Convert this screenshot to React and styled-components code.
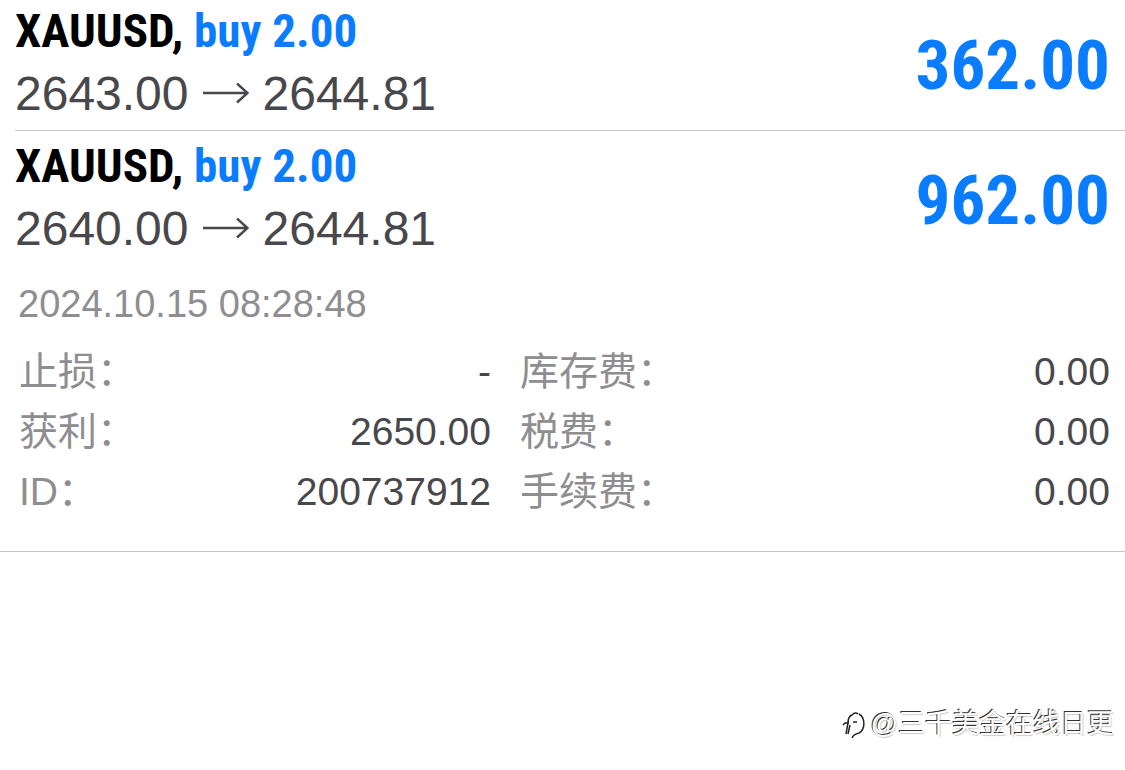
import React from "react";
import styled, { createGlobalStyle } from "styled-components";

const GlobalStyle = createGlobalStyle`
  * { box-sizing: border-box; }
  body {
    margin: 0;
    background: #fff;
    color: #48484c;
    font-family: "Liberation Sans", "Noto Sans CJK SC", sans-serif;
  }
`;

const Page = styled.main`
  display: flex;
  flex-direction: column;
  min-height: 100vh;
`;

const List = styled.section`
  border-bottom: 1px solid #c4c4c6;
  padding-bottom: 29px;
`;

const Position = styled.article`
  display: flex;
  align-items: center;
  justify-content: space-between;
  margin-left: 15px;
  padding: 5px 15px 4px 0;

  &:first-child {
    padding-top: 1px;
    border-bottom: 1px solid #c4c4c6;
  }
`;

const Title = styled.h2`
  margin: 0;
  font: bold 47px/60px "Roboto Condensed", Roboto, sans-serif;
  color: #000;
`;

const Side = styled.span`
  color: #097cff;
`;

const Prices = styled.p`
  display: flex;
  align-items: center;
  gap: 14px;
  margin: 0;
  font-size: 48px;
  line-height: 65px;
`;

const Profit = styled.strong`
  padding-top: 4px;
  font: bold 69px/84px "Roboto Condensed", Roboto, sans-serif;
  color: #097cff;
`;

const Opened = styled.time`
  display: block;
  padding: 14px 18px 13px;
  font-size: 38px;
  line-height: 50px;
  color: #8e8e90;
`;

const Details = styled.dl`
  display: grid;
  grid-template-columns: 472fr 590fr;
  column-gap: 29px;
  margin: 0;
  padding: 0 15px 0 19px;
`;

const Detail = styled.div`
  display: flex;
  justify-content: space-between;
  font-size: 39px;
  line-height: 60px;
`;

const Label = styled.dt`
  color: #8e8e90;
`;

const Value = styled.dd`
  margin: 0;
`;

const Watermark = styled.footer`
  display: flex;
  align-items: center;
  justify-content: flex-end;
  gap: 5px;
  margin-top: auto;
  padding: 0 11px 26px;
  font-size: 27px;
  line-height: 40px;
  color: #fff;
  text-shadow: -1px -1px 0 #333, 1px 1px 1px #ccc;
`;

function Arrow() {
  return (
    <svg width="46" height="22" viewBox="0 0 46 22" fill="none" stroke="#48484c" strokeWidth="2.4" aria-hidden="true">
      <path d="M0 10H44M34 0.500L44.500 10L34 19.500" />
    </svg>
  );
}

function Logo() {
  return (
    <svg width="24" height="32" viewBox="0 0 24 32" fill="none" stroke="#222" strokeWidth="1.500" aria-hidden="true">
      <path d="M1 17L3 15H7M16 6C14 4 12 5 10 7C7 8 6 11 6 15L4 26M6 26L8 17M11 14H15M17 6C24 10 23 22 17 25C13 26 11 27 10 30" />
    </svg>
  );
}

const positions = [
  { open: "2643.00", profit: "362.00" },
  { open: "2640.00", profit: "962.00" },
];

const details = [
  ["止损：", "-"],
  ["库存费：", "0.00"],
  ["获利：", "2650.00"],
  ["税费：", "0.00"],
  ["ID：", "200737912"],
  ["手续费：", "0.00"],
];

export default function App() {
  return (
    <Page lang="zh-CN">
      <GlobalStyle />
      <List>
        {positions.map((p) => (
          <Position key={p.open}>
            <div>
              <Title>XAUUSD, <Side>buy 2.00</Side></Title>
              <Prices><span>{p.open}</span><Arrow /><span>2644.81</span></Prices>
            </div>
            <Profit>{p.profit}</Profit>
          </Position>
        ))}
        <Opened dateTime="2024-10-15T08:28:48">2024.10.15 08:28:48</Opened>
        <Details>
          {details.map(([label, value]) => (
            <Detail key={label}>
              <Label>{label}</Label>
              <Value>{value}</Value>
            </Detail>
          ))}
        </Details>
      </List>
      <Watermark><Logo /><span>@三千美金在线日更</span></Watermark>
    </Page>
  );
}
